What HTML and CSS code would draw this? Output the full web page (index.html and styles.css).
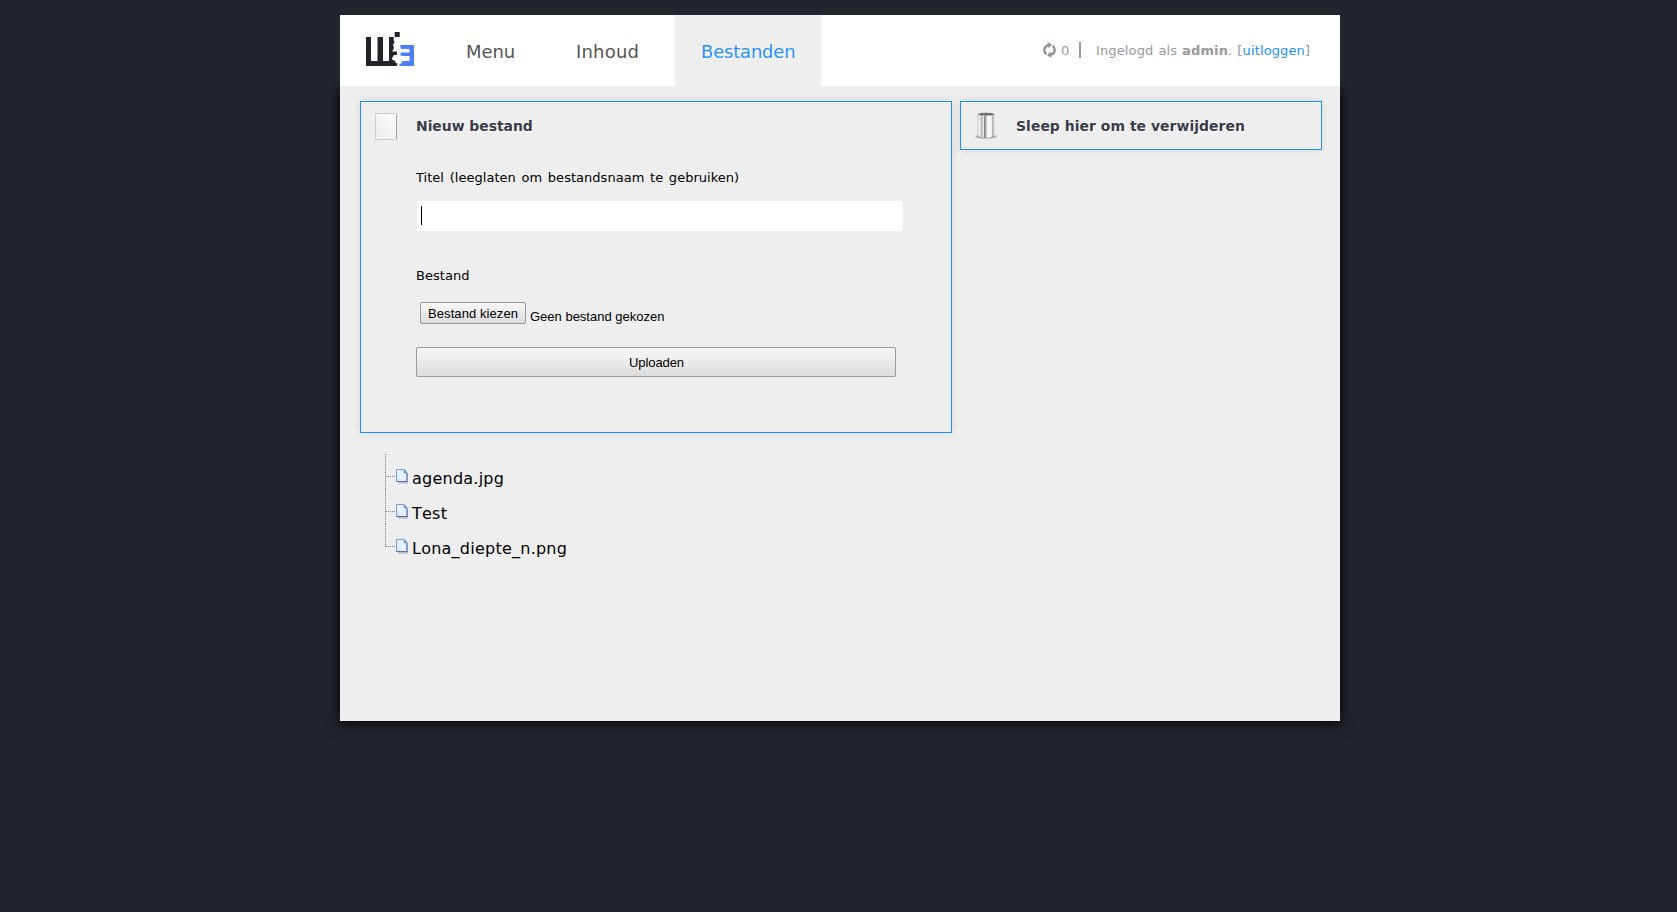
FILE: index.html
```
<!DOCTYPE html>
<html lang="nl">
<head>
<meta charset="utf-8">
<title>Bestanden</title>
<link rel="stylesheet" href="styles.css">
</head>
<body>
<div class="page">
  <header class="header">
    <svg class="logo" width="48" height="34" viewBox="0 0 48 34">
      <path fill="#22242c" d="M0 5h5v24h6.500V5H17v24h6V5h5l-.5 3 1 2-1.500 3 1 3-1.500 3 1 3v2l-1.500 2 .5 2 3 1-.5 1.500 2.500 1-.5 2.500H0z"/>
      <path fill="#22242c" d="M28.700 0h5v5h-5zM27 19.500h4v3.500h-4z"/>
      <path fill="#4d7ffa" d="M34 13h14v21H35.500l-3-1 3-2 1-2h7v-5H36l-2-1 1-2.500h8.500V17H35z"/>
    </svg>
    <nav class="nav">
      <a class="tab tab-menu">Menu</a>
      <a class="tab tab-content">Inhoud</a>
      <a class="tab tab-files active">Bestanden</a>
    </nav>
    <div class="user">
      <svg class="sync" width="13" height="16" viewBox="0 0 13 16">
        <path fill="none" stroke="#92989e" stroke-width="2.500" d="M3.400 12.300A5.200 5.200 0 0 1 3.200 4.200L5.500 3M9.600 3.700A5.200 5.200 0 0 1 9.800 11.800L7.500 13"/>
        <path fill="#92989e" d="M4.500 0L9 2.800 5.500 6.500zM8.500 16L4 13.200l3.500-3.700z"/>
      </svg>
      <span class="count">0</span>
      <span class="bar"></span>
      <span class="login">Ingelogd als <b>admin</b>. [<a class="logout">uitloggen</a>]</span>
    </div>
  </header>
  <main class="main">
    <div class="panels">
      <section class="panel upload">
        <svg class="panel-icon" width="22" height="27" viewBox="0 0 22 27">
          <defs><linearGradient id="paper" x1="1" y1="0" x2="0" y2="1"><stop offset="0" stop-color="#fff"/><stop offset=".35" stop-color="#f8f8f8"/><stop offset="1" stop-color="#ebebeb"/></linearGradient></defs>
          <rect x=".5" y=".5" width="21" height="26" rx=".5" fill="url(#paper)" stroke="#cfcfcf"/>
          <path stroke="#a0a0a0" d="M21.500 1v25"/>
        </svg>
        <div class="form">
          <h2 class="title">Nieuw bestand</h2>
          <label class="label label-title">Titel (leeglaten om bestandsnaam te gebruiken)</label>
          <div class="input"><span class="caret"></span></div>
          <label class="label label-file">Bestand</label>
          <div class="file-row"><button class="button choose">Bestand kiezen</button><span class="file-name">Geen bestand gekozen</span></div>
          <button class="button submit">Uploaden</button>
        </div>
      </section>
      <section class="panel trash">
        <svg class="trash-icon" width="24" height="28" viewBox="0 0 24 28">
          <defs><linearGradient id="metal"><stop offset="0" stop-color="#c4c4c4"/><stop offset=".12" stop-color="#f4f4f4"/><stop offset=".25" stop-color="#b0b0b0"/><stop offset=".35" stop-color="#eee"/><stop offset=".42" stop-color="#777"/><stop offset=".52" stop-color="#d0d0d0"/><stop offset=".65" stop-color="#fff"/><stop offset=".82" stop-color="#eee"/><stop offset=".9" stop-color="#aaa"/><stop offset="1" stop-color="#ddd"/></linearGradient></defs>
          <ellipse cx="12" cy="24.500" rx="11.500" ry="2.800" fill="#d4d4d4"/>
          <ellipse cx="12" cy="24.300" rx="10" ry="2" fill="#999"/>
          <path fill="url(#metal)" d="M3.500 2h17v22q-8.500 4-17 0z"/>
          <ellipse cx="12" cy="2.200" rx="8.300" ry="1.500" fill="#555" stroke="#ccc" stroke-width=".6"/>
          <path stroke="#aaa" d="M10 1v3M14 1v3"/>
        </svg>
        <h2 class="title">Sleep hier om te verwijderen</h2>
      </section>
    </div>
    <svg width="0" height="0" class="defs"><defs>
      <linearGradient id="sheet" x1="1" y1="0" x2="0" y2="1"><stop offset="0" stop-color="#bcdcf8"/><stop offset=".5" stop-color="#eaf5ff"/><stop offset="1" stop-color="#c8e2fb"/></linearGradient>
      <symbol id="doc" viewBox="0 0 12 15"><path fill="#b9b9c2" d="M2 13h10v1.500H2z"/><path fill="url(#sheet)" stroke="#7f9cd8" d="M.5.5H8L11 4v8.500H.5z"/><path fill="#6f8cc8" d="M8 0L11.500 4H8z"/><path stroke="#626ea8" d="M11 4v9M.5 12.500h11"/></symbol>
    </defs></svg>
    <ul class="tree">
      <li class="node"><span class="branch"></span><svg class="doc" width="12" height="15"><use href="#doc"/></svg><span class="name">agenda.jpg</span></li>
      <li class="node"><span class="branch"></span><svg class="doc" width="12" height="15"><use href="#doc"/></svg><span class="name">Test</span></li>
      <li class="node"><span class="branch"></span><svg class="doc" width="12" height="15"><use href="#doc"/></svg><span class="name">Lona_diepte_n.png</span></li>
    </ul>
  </main>
</div>
</body>
</html>
```
FILE: styles.css
```
* { box-sizing: border-box; }
html { background: #22252d; }
body { margin: 0; min-height: 912px; padding: 15px 0 0 340px; font-family: Verdana, "DejaVu Sans", sans-serif; color: #000; }
.page { width: 1000px; }
.header { position: relative; z-index: 1; display: flex; height: 71px; background: #fff; }
.logo { margin: 17px 0 0 26px; flex: none; }
.nav { display: flex; margin-left: 26px; }
.tab { padding: 0 26px; font-size: 18px; line-height: 74px; height: 71px; color: #555; white-space: nowrap; letter-spacing: -0.1px; }
.tab-menu { width: 110px; }
.tab-content { width: 125px; letter-spacing: 0.2px; }
.tab-files { width: 146px; letter-spacing: -0.2px; }
.active { background: #eee; color: #1e90ff; text-shadow: 1px 1px 0 #fff; }
.user { display: flex; margin: 27px 0 0 222px; height: 16px; line-height: 18px; font-size: 13px; color: #999; white-space: nowrap; }
.count { margin-left: 5px; width: 18px; }
.bar { width: 2px; height: 16px; background: #999; }
.login { margin-left: 15px; word-spacing: 0.7px; letter-spacing: 0.13px; }
.logout { color: #1e90ff; }
.main { height: 635px; padding: 15px 18px 0 20px; background: #eee; box-shadow: 0 2px 14px #000; }
.panels { display: flex; align-items: flex-start; gap: 8px; }
.panel { display: flex; border: 1px solid #1e90ff; box-shadow: 0 0 8px rgba(0,0,0,.1); }
.upload { width: 592px; height: 332px; padding: 11px 0 0 14px; }
.panel-icon { flex: none; }
.form { display: flex; flex-direction: column; margin-left: 19px; width: 488px; }
.title { margin: 0; font-size: 14px; line-height: 27px; color: #383c4c; text-shadow: 1px 1px 0 #fff; white-space: nowrap; }
.upload .title { letter-spacing: -0.08px; }
.label { font-size: 13px; line-height: 16px; white-space: nowrap; word-spacing: 1.5px; letter-spacing: 0.03px; }
.label-title { margin-top: 30px; }
.input { margin: 15px 0 0 1px; width: 486px; height: 30px; padding: 5px 4px; background: #fff; }
.caret { display: block; width: 1px; height: 19px; background: #000; }
.label-file { margin-top: 37px; }
.file-row { display: flex; margin: 18px 0 0 4px; height: 22px; }
.button { padding: 0; border: 1px solid #999; border-radius: 2px; background: linear-gradient(#f8f8f8, #ddd); color: #000; font: 13px "Liberation Sans", Arial, sans-serif; }
.choose { width: 106px; height: 22px; letter-spacing: 0.08px; }
.file-name { margin: 4px 0 0 4px; font: 13px/22px "Liberation Sans", Arial, sans-serif; }
.submit { width: 480px; height: 30px; margin-top: 23px; padding-left: 1px; letter-spacing: -0.1px; }
.trash { width: 362px; height: 49px; padding: 10px 0 0 13px; }
.trash-icon { flex: none; margin-right: 18px; }
.trash .title { line-height: 29px; }
.defs { display: block; }
.tree { margin: 21px 0 0 25px; padding: 0; list-style: none; }
.node { display: flex; height: 35px; border-left: 1px dotted #808080; }
.node:last-child { border-left: 0; }
.branch { width: 9px; height: 23px; border-bottom: 1px dotted #808080; }
.node:last-child .branch { width: 10px; border-left: 1px dotted #808080; }
.doc { margin: 15px 0 0 1px; }
.name { margin-left: 4px; padding-top: 14px; font-size: 16px; line-height: 21px; letter-spacing: 0.24px; font-kerning: none; white-space: nowrap; }
```
